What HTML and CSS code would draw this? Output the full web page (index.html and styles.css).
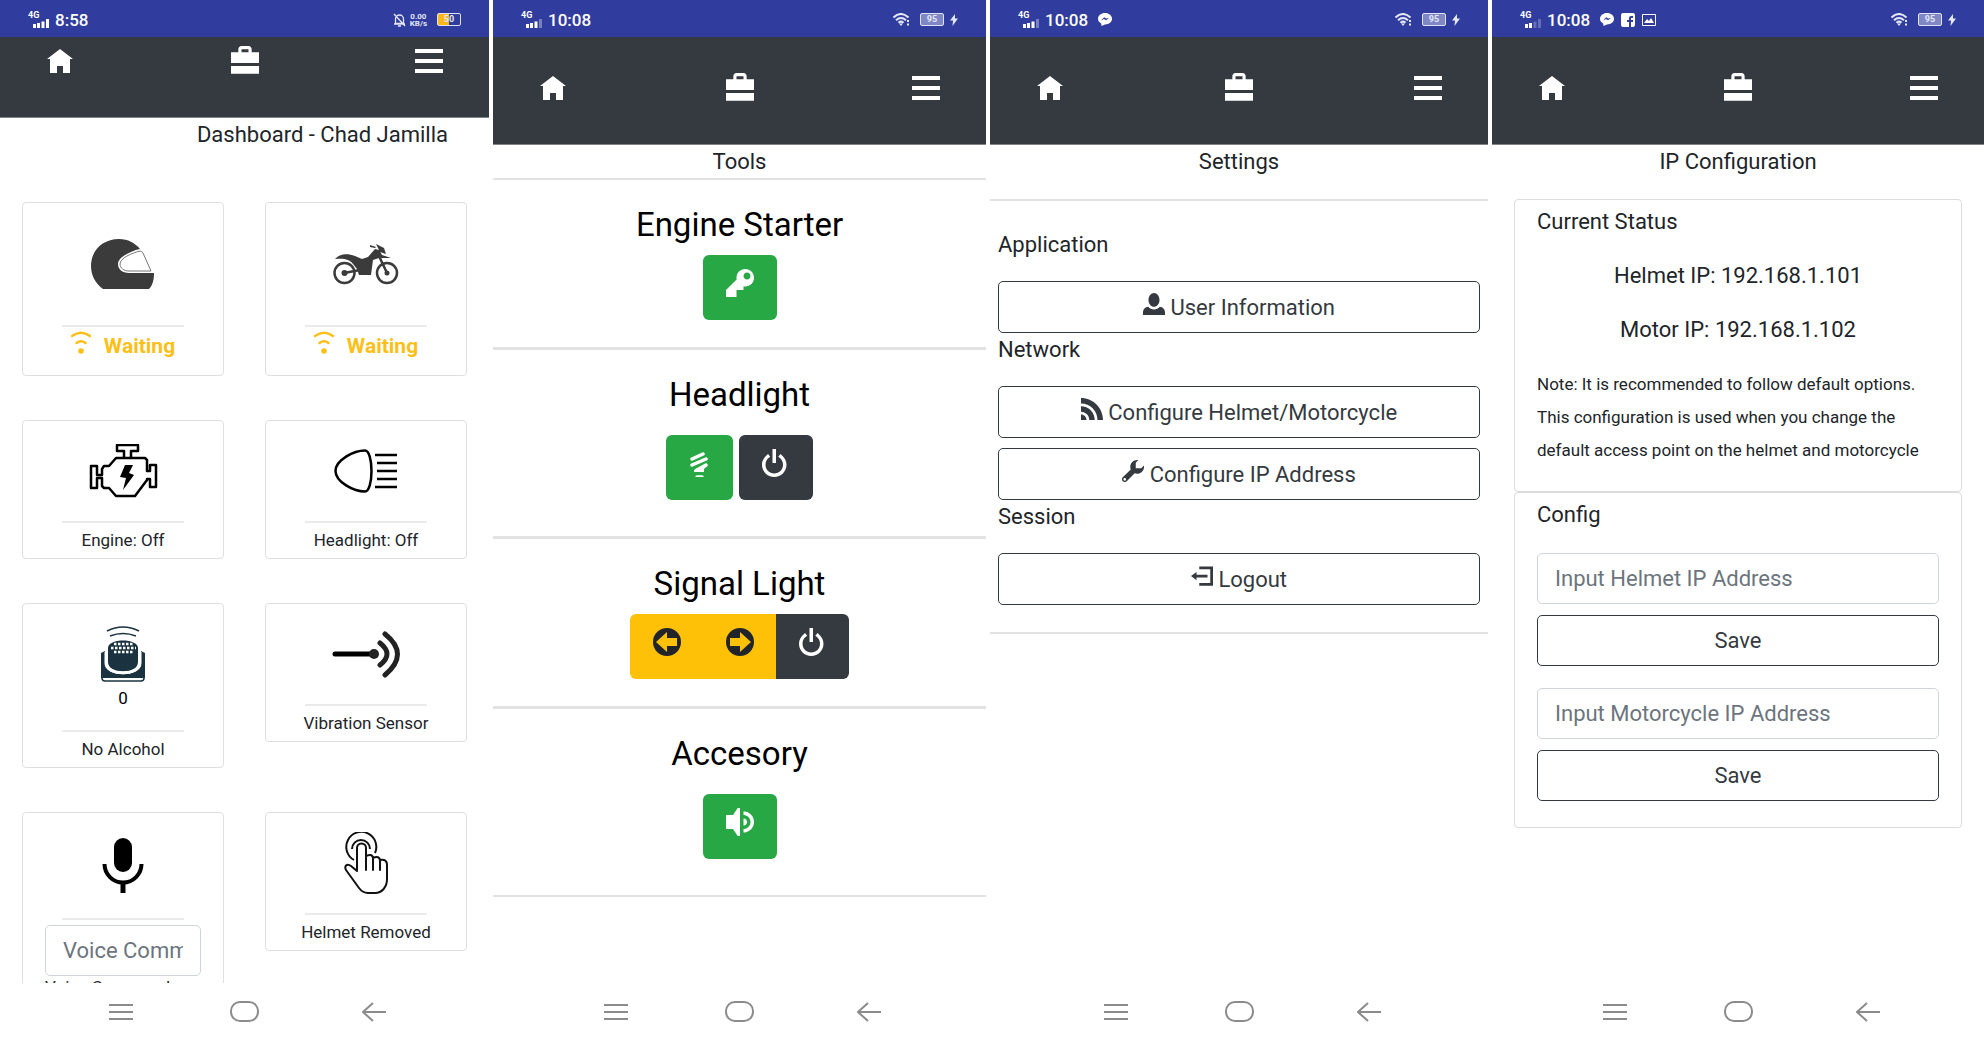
FILE: index.html
```html
<!DOCTYPE html>
<html lang="en">
<head>
<meta charset="utf-8">
<meta name="viewport" content="width=device-width, initial-scale=1">
<title>Smart Helmet</title>
<link rel="stylesheet" href="styles.css">
</head>
<body>
<svg class="sprite" aria-hidden="true">
  <symbol id="home" viewBox="0 0 28 28"><path d="M14 3L1 13h3v14h7v-7h6v7h7V13h3z"/></symbol>
  <symbol id="case" viewBox="0 0 8 8"><path d="M3 0c-.55 0-.9.4-.9.9v.85H0v3.1h8v-3.100H5.900V.9C5.900.4 5.550 0 5 0zm0 .9h2v.85H3zM0 5.700v2.200h8V5.700z"/></symbol>
  <symbol id="menu" viewBox="0 0 28 28"><path d="M0 3h28v4H0zM0 13h28v4H0zM0 23h28v4H0z"/></symbol>
  <symbol id="power" viewBox="0 0 8 8"><path d="M3 0v4h1V0zM1.720 1.440l-.38.31C.53 2.390 0 3.390 0 4.500 0 6.430 1.570 8 3.500 8S7 6.430 7 4.500c0-1.110-.53-2.110-1.340-2.750l-.38-.31-.63.78.38.31c.58.46.97 1.170.97 1.970 0 1.390-1.110 2.500-2.500 2.500S1 5.890 1 4.500c0-.8.36-1.510.94-1.970l.41-.31z"/></symbol>
  <symbol id="signal-full" viewBox="0 0 18 9"><path d="M1 5h3v4H1zM5 4h3v5H5zM9.500 2.500h3V9h-3zM14 0h3v9h-3z"/></symbol>
  <symbol id="signal" viewBox="0 0 18 9"><path d="M1 5h3v4H1zM5 4h3v5H5zM9.500 2.500h3V9h-3z"/><path d="M14 0h3v9h-3z" opacity=".35"/></symbol>
  <symbol id="signal-weak" viewBox="0 0 18 9"><path d="M1 5h3v4H1zM5 4h3v5H5z"/><path d="M9.500 2.500h3V9h-3zM14 0h3v9h-3z" opacity=".25"/></symbol>
  <symbol id="wifi" viewBox="0 0 17 13"><path d="M.5 4.500Q8-2.500 15.500 4.500M3 7.200Q8 2.800 13 7.200M5.500 9.800Q8 7.500 10.500 9.800" fill="none" stroke="currentColor" stroke-width="2"/><path d="M8 13l-2-2.500h4zM14 7h2v2h-2zM14 10.500h2v2h-2z"/></symbol>
  <symbol id="bolt" viewBox="0 0 8 13"><path d="M5 1L0 7.500h3L2.500 13 8 5.500H5z"/></symbol>
  <symbol id="chat" viewBox="0 0 14 13"><path fill-rule="evenodd" d="M7 0c4 0 7 2.600 7 5.800S11 11.500 7 11.500l-3.500 1.500-.3-2.500C1.200 9.500 0 7.800 0 5.800 0 2.600 3 0 7 0zM3 7.500l3-1.500 2 1.200L11 5 8 5.500 6.200 4.200z"/></symbol>
  <symbol id="yellow-wifi" viewBox="0 0 20 24"><path d="M1 5Q10 -1.500 19 5M5.500 12Q10 8.500 14.500 12" fill="none" stroke="currentColor" stroke-width="2.500" stroke-linecap="round"/><circle cx="10" cy="20" r="2.800"/></symbol>
  <symbol id="key-menu" viewBox="0 0 24 18"><path d="M0 2h24M0 9h24M0 16h24" fill="none" stroke="currentColor" stroke-width="2"/></symbol>
  <symbol id="key-home" viewBox="0 0 29 21"><rect x="1" y="1" width="27" height="19" rx="9" fill="none" stroke="currentColor" stroke-width="2"/></symbol>
  <symbol id="key-back" viewBox="0 0 24 20"><path d="M11 1L1 10l10 9M1 10h23" fill="none" stroke="currentColor" stroke-width="2"/></symbol>
</svg>

<div class="screens">
  <section class="screen" aria-label="Dashboard">
    <div class="status">
      <div class="status-group"><span class="network"><small>4G</small><svg width="18" height="9"><use href="#signal-full"/></svg></span><time>8:58</time></div>
      <div class="status-group status-right">
        <svg width="13" height="14" viewBox="0 0 13 14"><path d="M2.500 10.500V6a4 4 0 0 1 8 0v4.500zM1 11h11M5 13h3M1 1l11 12" fill="none" stroke="currentColor" stroke-width="1.300"/></svg>
        <span class="rate"><span>0.00</span><span>KB/s</span></span>
        <span class="battery battery-low">50</span>
      </div>
    </div>
    <nav class="topnav topnav-scrolled">
      <a href="#dashboard" aria-label="Home"><svg class="icon"><use href="#home"/></svg></a>
      <a href="#tools" aria-label="Tools"><svg class="icon"><use href="#case"/></svg></a>
      <a href="#settings" aria-label="Menu"><svg class="icon"><use href="#menu"/></svg></a>
    </nav>
    <main class="content">
      <h1 class="title title-right">Dashboard - Chad Jamilla</h1>
      <div class="cards">
        <article class="card">
          <div class="media media-large"><svg width="64" height="51" viewBox="0 0 64 51"><path d="M12 50C4 44 0 36 0 27 0 11 12 0 28 0c9 0 16 4 21 10-9 2-22 8-22 15 0 5 4 9 11 9h25c0 6-1 12-5 16z" fill="#3b3b3b"/><path d="M49 12c-8 2-20 7-20 13 0 4 4 7 9 7h22l-8-18q-1-2-3-2z" fill="none" stroke="#777"/></svg></div>
          <p class="waiting"><svg width="20" height="24"><use href="#yellow-wifi"/></svg><span>Waiting</span></p>
        </article>
        <article class="card">
          <div class="media media-large"><svg width="66" height="41" viewBox="0 0 66 41"><g fill="none" stroke="#3b3b3b" stroke-width="2.500"><circle cx="11.500" cy="29" r="10"/><circle cx="54" cy="29" r="10"/><path d="M11 29l16-3M46 12l8 17"/></g><g fill="#3b3b3b"><circle cx="11.500" cy="29" r="3"/><circle cx="54" cy="29" r="2.500"/><path d="M2 15c4-5 12-6 20-3l7 3 6-2 7-8 4 1 3 5 9 3-12 0-6 2-2 15H26l-2-6-4-5c-3-5-10-6-18-5zM37 1l6 2-1 1-5-1zM43 0l8 4 2 6-6-2z"/></g></svg></div>
          <p class="waiting"><svg width="20" height="24"><use href="#yellow-wifi"/></svg><span>Waiting</span></p>
        </article>
        <article class="card">
          <div class="media"><svg width="69" height="54" viewBox="0 0 69 54"><g fill="none" stroke="#000" stroke-width="2.500" stroke-linejoin="round"><path d="M35 13V7h-7V1h21v6h-7v6"/><path d="M27 14h29l2 2v11h3v-6h6v22h-6v-8h-3v1L46 52H27l-7-8h-5l-2-2v-8H8v10H2V22h6v9h5v-6l2-3h5z"/></g><path d="M36 21h8l-4 8 5 2-11 15 3-12-6-1z"/></svg></div>
          <p class="label">Engine: Off</p>
        </article>
        <article class="card">
          <div class="media"><svg width="64" height="44" viewBox="0 0 64 44"><g fill="none" stroke="#000" stroke-width="2.500"><path d="M31 1.500C20 1.500 1.500 11 1.500 22S20 42.500 31 42.500c4 0 6.500-9.500 6.500-20.500S35 1.500 31 1.500z"/><path d="M41 6h22M43 14h20M43 22h20M43 30h20M41 38h22"/></g></svg></div>
          <p class="label">Headlight: Off</p>
        </article>
        <article class="card">
          <div class="media media-reading"><svg width="44" height="56" viewBox="0 0 44 56"><g fill="none" stroke="#1b3340" stroke-width="1.500"><path d="M6 5q16-8 32 0M9 10q13-5 26 0"/><path d="M1 49v3q0 3 3 3h36q3 0 3-3v-3"/></g><g fill="#1b3340"><path d="M7 22c0-10 30-10 30 0v14c0 13-30 13-30 0z"/><path d="M0 27l4-2v12c0 15 36 15 36 0V25l4 2v25H0z"/></g><path d="M5 26v11c0 13 34 13 34 0V26" fill="none" stroke="#fff" stroke-width="3"/><g fill="none" stroke="#fff" stroke-width="2.500" stroke-dasharray="2.500 1.500"><path d="M13 18h19M10 22h25M13 26h19"/></g></svg><span>0</span></div>
          <p class="label">No Alcohol</p>
        </article>
        <article class="card">
          <div class="media"><svg width="69" height="47" viewBox="0 0 69 47"><g fill="none" stroke="#222" stroke-width="5" stroke-linecap="round"><path d="M3 23h36" stroke="#000"/><path d="M48 12q14 11 0 22M53 3q25 20 0 41"/></g><circle cx="42" cy="23" r="5" fill="#222"/></svg></div>
          <p class="label">Vibration Sensor</p>
        </article>
        <article class="card">
          <div class="media media-voice"><svg width="42" height="55" viewBox="0 0 42 55"><rect x="12" width="18" height="34" rx="9"/><path d="M2.500 26a18.500 18.500 0 0 0 37 0" fill="none" stroke="#000" stroke-width="4"/><path d="M18.500 44h5v11h-5z"/></svg></div>
          <div class="voice"><input class="field" id="voice" type="text" placeholder="Voice Command" size="4"><label for="voice">Voice Command</label></div>
        </article>
        <article class="card">
          <div class="media"><svg width="45" height="62" viewBox="0 0 45 62"><g fill="none" stroke="#111" stroke-width="2" stroke-linejoin="round"><path d="M10 28A15 15 0 1 1 31 21M8 17a9 9 0 0 1 18 0"/><path d="M13 39V16a4.500 4.500 0 0 1 9 0v22V24c5-2 7-1 7 3v11V26c4-2 7-1 7 3v9-10c5-1 7 1 7 5v14c0 8-5 14-12 14h-7c-4 0-6-1-9-5L2 38c-2-4 1-7 5-4z"/></g></svg></div>
          <p class="label">Helmet Removed</p>
        </article>
      </div>
    </main>
    <div class="keys">
      <button aria-label="Recent apps"><svg width="24" height="18"><use href="#key-menu"/></svg></button>
      <button aria-label="Home screen"><svg width="29" height="21"><use href="#key-home"/></svg></button>
      <button aria-label="Back"><svg width="24" height="20"><use href="#key-back"/></svg></button>
    </div>
  </section>

  <section class="screen" aria-label="Tools">
    <div class="status">
      <div class="status-group"><span class="network"><small>4G</small><svg width="18" height="9"><use href="#signal"/></svg></span><time>10:08</time></div>
      <div class="status-group status-right"><svg width="17" height="13"><use href="#wifi"/></svg><span class="battery">95</span><svg class="charge" width="8" height="13"><use href="#bolt"/></svg></div>
    </div>
    <nav class="topnav">
      <a href="#dashboard" aria-label="Home"><svg class="icon"><use href="#home"/></svg></a>
      <a href="#tools" aria-label="Tools"><svg class="icon"><use href="#case"/></svg></a>
      <a href="#settings" aria-label="Menu"><svg class="icon"><use href="#menu"/></svg></a>
    </nav>
    <main class="content">
      <h1 class="title title-ruled">Tools</h1>
      <section class="tool">
        <h2>Engine Starter</h2>
        <div class="actions"><button class="act act-green" aria-label="Start engine"><svg class="icon" viewBox="0 0 8 8"><path d="M5.500 0C4.120 0 3 1.120 3 2.500c0 .16 0 .32.03.47L0 6v2h3V6h2V5l.03-.03c.15.03.31.03.47.03C6.880 5 8 3.880 8 2.500S6.880 0 5.500 0zM6 1c.55 0 1 .45 1 1s-.45 1-1 1-1-.45-1-1 .45-1 1-1z"/></svg></button></div>
      </section>
      <section class="tool tool-roomy">
        <h2>Headlight</h2>
        <div class="actions">
          <button class="act act-green act-narrow" aria-label="Headlight on"><svg class="icon" viewBox="0 0 28 28"><g fill="none" stroke="currentColor" stroke-width="3.500" stroke-linecap="round"><path d="M6 10l11-5M6 16l14-6M11 21l9-5M11 28h5"/></g><path d="M8 21l11-6 2 2-3 3v3H8z"/></svg></button>
          <button class="act act-dark" aria-label="Headlight off"><svg class="icon"><use href="#power"/></svg></button>
        </div>
      </section>
      <section class="tool">
        <h2>Signal Light</h2>
        <div class="actions actions-joined">
          <button class="act act-yellow" aria-label="Left signal"><svg class="icon" viewBox="0 0 28 28"><path fill-rule="evenodd" d="M14 0a14 14 0 1 1 0 28 14 14 0 1 1 0-28zM3 14l11 10v-6h10v-8H14V4z"/></svg></button>
          <button class="act act-yellow" aria-label="Right signal"><svg class="icon" viewBox="0 0 28 28"><path fill-rule="evenodd" d="M14 0a14 14 0 1 1 0 28 14 14 0 1 1 0-28zM25 14L14 4v6H4v8h10v6z"/></svg></button>
          <button class="act act-dark" aria-label="Signals off"><svg class="icon"><use href="#power"/></svg></button>
        </div>
      </section>
      <section class="tool tool-roomy">
        <h2>Accesory</h2>
        <div class="actions"><button class="act act-green" aria-label="Horn"><svg class="icon" viewBox="0 0 8 8"><path d="M3.340 0L2 2H0v4h2l1.340 2H4V0zM5 1v1c.17 0 .34.02.5.06C6.360 2.280 7 3.060 7 4s-.63 1.720-1.500 1.940C5.340 5.980 5.170 6 5 6v1c.25 0 .48-.04.72-.09h.03C7.050 6.580 8 5.400 8 4S7.050 1.420 5.750 1.090C5.520 1.030 5.260 1 5 1zm0 2v2c.09 0 .18-.01.25-.03.43-.11.75-.51.75-.97s-.31-.86-.75-.97C5.170 3.010 5.080 3 5 3z"/></svg></button></div>
      </section>
    </main>
    <div class="keys">
      <button aria-label="Recent apps"><svg width="24" height="18"><use href="#key-menu"/></svg></button>
      <button aria-label="Home screen"><svg width="29" height="21"><use href="#key-home"/></svg></button>
      <button aria-label="Back"><svg width="24" height="20"><use href="#key-back"/></svg></button>
    </div>
  </section>

  <section class="screen" aria-label="Settings">
    <div class="status">
      <div class="status-group"><span class="network"><small>4G</small><svg width="18" height="9"><use href="#signal"/></svg></span><time>10:08</time><svg class="notice" width="14" height="13"><use href="#chat"/></svg></div>
      <div class="status-group status-right"><svg width="17" height="13"><use href="#wifi"/></svg><span class="battery">95</span><svg class="charge" width="8" height="13"><use href="#bolt"/></svg></div>
    </div>
    <nav class="topnav">
      <a href="#dashboard" aria-label="Home"><svg class="icon"><use href="#home"/></svg></a>
      <a href="#tools" aria-label="Tools"><svg class="icon"><use href="#case"/></svg></a>
      <a href="#settings" aria-label="Menu"><svg class="icon"><use href="#menu"/></svg></a>
    </nav>
    <main class="content">
      <h1 class="title">Settings</h1>
      <div class="settings">
        <h2 class="group">Application</h2>
        <button class="outline"><svg class="glyph" viewBox="0 0 8 8"><path d="M4 0C2.900 0 2 1.120 2 2.500S2.900 5 4 5s2-1.120 2-2.500S5.100 0 4 0zM1.910 5C.85 5.050 0 5.920 0 7v1h8V7c0-1.080-.84-1.950-1.910-2C5.550 5.610 4.810 6 4 6s-1.550-.39-2.090-1z"/></svg> User Information</button>
        <h2 class="group">Network</h2>
        <button class="outline"><svg class="glyph" viewBox="0 0 8 8"><path d="M0 0v2c3.330 0 6 2.670 6 6h2c0-4.410-3.590-8-8-8zm0 3v2c1.670 0 3 1.330 3 3h2c0-2.750-2.250-5-5-5zm0 3v2h2c0-1.110-.9-2-2-2z"/></svg> Configure Helmet/Motorcycle</button>
        <button class="outline outline-next"><svg class="glyph" viewBox="0 0 8 8"><path d="M5.500 0C4.120 0 3 1.120 3 2.500c0 .32.08.62.19.91L.28 6.290c-.39.39-.39 1.050 0 1.440.2.2.46.28.72.28s.52-.09.72-.28L4.600 4.820c.28.11.58.19.91.19 1.380 0 2.500-1.120 2.500-2.500 0-.16 0-.32-.03-.47L7 3H5V1l.97-.97C5.820 0 5.660 0 5.500 0zM1 6.500c.28 0 .5.22.5.5s-.22.5-.5.5-.5-.22-.5-.5.22-.5.5-.5z"/></svg> Configure IP Address</button>
        <h2 class="group">Session</h2>
        <button class="outline"><svg class="glyph" viewBox="0 0 8 8"><path d="M3 .5v1h4v5H3v1h5v-7zM2 2.500L0 4l2 1.500v-1h4v-1H2z"/></svg> Logout</button>
      </div>
    </main>
    <div class="keys">
      <button aria-label="Recent apps"><svg width="24" height="18"><use href="#key-menu"/></svg></button>
      <button aria-label="Home screen"><svg width="29" height="21"><use href="#key-home"/></svg></button>
      <button aria-label="Back"><svg width="24" height="20"><use href="#key-back"/></svg></button>
    </div>
  </section>

  <section class="screen" aria-label="IP Configuration">
    <div class="status">
      <div class="status-group"><span class="network"><small>4G</small><svg width="18" height="9"><use href="#signal-weak"/></svg></span><time>10:08</time><svg class="notice" width="14" height="13"><use href="#chat"/></svg>
        <svg width="14" height="14" viewBox="0 0 14 14"><path fill-rule="evenodd" d="M2 0h10q2 0 2 2v10q0 2-2 2h-2V9h2V7h-2V5h2V3h-2Q8 3 8 5v2H6v2h2v5H2q-2 0-2-2V2q0-2 2-2z"/></svg>
        <svg width="14" height="12" viewBox="0 0 14 12"><path d="M.5.5h13v11H.5z" fill="none" stroke="currentColor"/><path d="M2 9l3-4 2 2 2-3 3 5z"/></svg></div>
      <div class="status-group status-right"><svg width="17" height="13"><use href="#wifi"/></svg><span class="battery">95</span><svg class="charge" width="8" height="13"><use href="#bolt"/></svg></div>
    </div>
    <nav class="topnav">
      <a href="#dashboard" aria-label="Home"><svg class="icon"><use href="#home"/></svg></a>
      <a href="#tools" aria-label="Tools"><svg class="icon"><use href="#case"/></svg></a>
      <a href="#settings" aria-label="Menu"><svg class="icon"><use href="#menu"/></svg></a>
    </nav>
    <main class="content">
      <h1 class="title">IP Configuration</h1>
      <div class="panels">
        <section class="panel">
          <h2 class="group">Current Status</h2>
          <p class="address">Helmet IP: 192.168.1.101</p>
          <p class="address">Motor IP: 192.168.1.102</p>
          <p class="note">Note: It is recommended to follow default options. This configuration is used when you change the default access point on the helmet and motorcycle</p>
        </section>
        <section class="panel panel-form">
          <h2 class="group">Config</h2>
          <form class="pair"><input class="field" type="text" aria-label="Helmet IP address" placeholder="Input Helmet IP Address"><button class="outline" type="button">Save</button></form>
          <form class="pair"><input class="field" type="text" aria-label="Motorcycle IP address" placeholder="Input Motorcycle IP Address"><button class="outline" type="button">Save</button></form>
        </section>
      </div>
    </main>
    <div class="keys">
      <button aria-label="Recent apps"><svg width="24" height="18"><use href="#key-menu"/></svg></button>
      <button aria-label="Home screen"><svg width="29" height="21"><use href="#key-home"/></svg></button>
      <button aria-label="Back"><svg width="24" height="20"><use href="#key-back"/></svg></button>
    </div>
  </section>
</div>
</body>
</html>
```
FILE: styles.css
```css
* { box-sizing: border-box; }

body {
  margin: 0;
  background: #fff;
  color: #212529;
  font: 22px/32px Roboto, "Liberation Sans", sans-serif;
}

h1, h2, p { margin: 0; font-size: inherit; font-weight: 400; }
button, input { font: inherit; }
button { cursor: pointer; }
svg { display: block; fill: currentColor; flex: none; }
.sprite { position: absolute; width: 0; height: 0; }

.screens {
  display: grid;
  grid-template-columns: 489fr 493fr 498fr 492fr;
  gap: 4px;
}

.screen {
  display: flex;
  flex-direction: column;
  height: 100vh;
  min-width: 0;
}

/* Phone status bar */
.status {
  display: flex;
  justify-content: space-between;
  align-items: center;
  height: 37px;
  flex: none;
  padding: 2px 28px 0;
  background: #303c9e;
  color: #fff;
  font-size: 17px;
  font-weight: 500;
}
.status-group { display: flex; align-items: center; gap: 7px; }
.status-right { gap: 10px; color: #e4e7f6; }
.network small, .rate span { display: block; font-size: 9px; line-height: 7px; font-weight: 700; }
.rate span { font-size: 8px; }
.network { width: 20px; }
.network svg { margin-left: 4px; }
.notice { margin-left: 3px; }
.rate { margin-left: -6px; text-align: center; }
.battery {
  display: flex;
  align-items: center;
  justify-content: center;
  width: 24px;
  height: 13px;
  border: 1px solid #dfe2f5;
  border-radius: 2px;
  background: #7f87c5;
  font-size: 9px;
  font-weight: 700;
  line-height: 11px;
}
.battery-low { background: linear-gradient(90deg, #fbb81c 50%, #303c9e 50%); }
.charge { margin-left: -4px; }

/* App navigation */
.topnav {
  display: flex;
  justify-content: space-between;
  align-items: flex-start;
  flex: none;
  height: 108px;
  padding: 36px 46px 0;
  border-bottom: 1px solid #808387;
  background: #343a40;
}
.topnav-scrolled { height: 81px; padding-top: 9px; }
.topnav a { color: #fff; }
.icon { width: 28px; height: 28px; }

.content {
  flex: 1;
  min-height: 0;
  overflow-y: auto;
  scrollbar-width: none;
}
.title { height: 33px; padding-top: 1px; text-align: center; }
.title-right { padding-right: 41px; text-align: right; }
.title-ruled { height: 35px; border-bottom: 2px solid #e2e2e2; }

/* Dashboard */
.cards {
  display: grid;
  grid-template-columns: 1fr 1fr;
  align-items: start;
  gap: 44px 41px;
  padding: 51px 22px 44px;
}
.card {
  display: flex;
  flex-direction: column;
  align-items: center;
  border: 1px solid #dfdfdf;
  border-radius: 4px;
  font-size: 17px;
}
.media {
  display: flex;
  flex-direction: column;
  align-items: center;
  justify-content: center;
  width: 122px;
  height: 102px;
  border-bottom: 2px solid #ebe9ea;
  color: #000;
}
.media-large { height: 124px; }
.media-reading { height: 128px; padding-top: 6px; line-height: 33px; }
.media-voice { height: 107px; }
.label { height: 35px; line-height: 34px; }
.waiting {
  display: flex;
  gap: 13px;
  height: 48px;
  padding-top: 4px;
  color: #fcbf18;
  font-size: 21px;
  font-weight: 700;
  line-height: 30px;
}
.voice { align-self: stretch; padding: 5px 22px 22px; }
.voice label { display: block; line-height: 22px; }

/* Form controls */
.field, .outline {
  display: block;
  width: 100%;
  height: 51px;
  border: 1px solid #ced4da;
  border-radius: 5px;
  background: #fff;
  font-size: 22px;
}
.field { padding: 0 17px; color: #495057; }
.field::placeholder { color: #6c757d; opacity: 1; }
.outline { padding: 0; border-color: #343a40; color: #343a40; }

/* Tools */
.tool {
  padding: 26px 0 27px;
  border-bottom: 3px solid #e2e2e2;
  color: #000;
  text-align: center;
}
.tool h2 { margin-bottom: 11px; font-size: 33px; line-height: 38px; }
.tool-roomy { padding-bottom: 36px; }
.tool-roomy h2 { margin-bottom: 21px; }
.tool:last-child { border-bottom-width: 2px; }
.actions { display: flex; justify-content: center; gap: 6px; }
.actions-joined { gap: 0; }
.act {
  display: flex;
  justify-content: center;
  width: 74px;
  height: 65px;
  padding: 14px 0 0;
  border: 0;
  border-radius: 6px;
  color: #fff;
}
.act-narrow { width: 67px; }
.act-green { background: #28a745; }
.act-dark { background: #343a40; }
.act-yellow { background: #ffc107; color: #212529; }
.actions-joined .act { width: 73px; border-radius: 0; }
.actions-joined .act:first-child { border-radius: 6px 0 0 6px; }
.actions-joined .act:last-child { border-radius: 0 6px 6px 0; }

/* Settings */
.settings {
  margin-top: 21px;
  padding: 27px 8px;
  border: solid #e2e2e2;
  border-width: 2px 0;
}
.group { margin-bottom: 22px; }
.settings .group { margin-bottom: 19px; line-height: 34px; }
.settings .outline { height: 52px; padding-top: 1px; }
.outline-next { margin-top: 10px; }
.glyph { display: inline-block; width: 22px; height: 22px; vertical-align: baseline; }

/* IP configuration */
.panels { padding: 21px 22px; }
.panel {
  padding: 6px 22px 24px;
  border: 1px solid #dcdcdc;
  border-radius: 4px;
}
.panel-form { padding-bottom: 26px; }
.address { margin-bottom: 22px; text-align: center; }
.note { font-size: 17px; line-height: 33px; }
.pair { display: grid; gap: 11px; }
.pair + .pair { margin-top: 22px; }

/* Android keys */
.keys {
  display: grid;
  grid-template-columns: 1fr auto 1fr;
  align-items: center;
  flex: none;
  height: 57px;
  color: #8b8b8b;
}
.keys button { padding: 0; border: 0; background: none; color: inherit; }
.keys button:first-child { justify-self: end; margin-right: 97px; }
.keys button:last-child { margin-left: 103px; justify-self: start; }
```
